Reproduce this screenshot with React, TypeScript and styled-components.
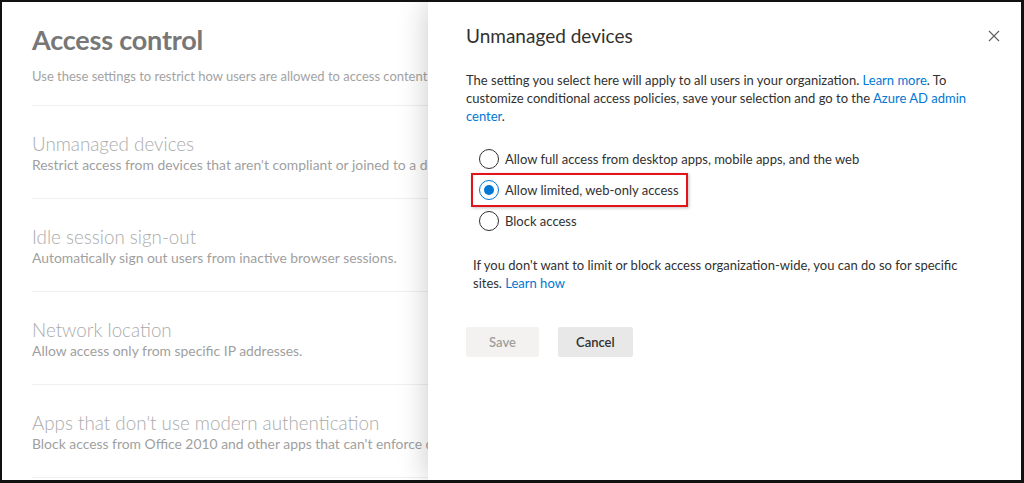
import styled, { createGlobalStyle } from "styled-components";

const GlobalStyle = createGlobalStyle`
  html, body {
    margin: 0;
    padding: 0;
    background: #ffffff;
  }
  * {
    box-sizing: border-box;
  }
`;

const font = `"Segoe UI", Lato, "Open Sans", sans-serif`;

const Frame = styled.div`
  position: relative;
  width: 1024px;
  height: 483px;
  overflow: hidden;
  border: 2px solid #111111;
  border-right-width: 3px;
  border-bottom-width: 3px;
  background: #ffffff;
  font-family: ${font};
`;

const Page = styled.main`
  padding: 20px 0 0 30px;
  width: 760px;
`;

const PageHeader = styled.header`
  padding-bottom: 20px;
  border-bottom: 1px solid #efefef;
`;

const PageTitle = styled.h1`
  margin: 0;
  font-size: 27px;
  line-height: 36px;
  font-weight: 700;
  color: #777777;
  letter-spacing: -0.2px;
`;

const PageIntro = styled.p`
  margin: 9px 0 0;
  font-size: 13px;
  line-height: 18px;
  color: #a3a3a3;
  white-space: nowrap;
`;

const Setting = styled.section`
  padding: 26px 0 24px;
  border-bottom: 1px solid #efefef;
`;

const SettingTitle = styled.h2`
  margin: 0;
  font-size: 18.8px;
  line-height: 24px;
  font-weight: 300;
  color: #ababab;
  white-space: nowrap;
`;

const SettingDesc = styled.p`
  margin: 0;
  font-size: 13.9px;
  line-height: 18px;
  color: #9f9f9f;
  white-space: nowrap;
`;

const Panel = styled.aside`
  position: absolute;
  top: 0;
  right: 0;
  bottom: 0;
  width: 593px;
  background: #ffffff;
  box-shadow: 0 0 28px rgba(0, 0, 0, 0.22);
  padding: 20px 15px 0 38px;
  color: #323130;
`;

const PanelHeader = styled.div`
  display: flex;
  align-items: center;
  justify-content: space-between;
  height: 28px;
  margin-bottom: 21px;
`;

const PanelTitle = styled.h2`
  margin: 0;
  font-size: 19px;
  line-height: 28px;
  font-weight: 400;
  color: #323130;
`;

const CloseButton = styled.button`
  display: flex;
  align-items: center;
  justify-content: center;
  width: 24px;
  height: 24px;
  padding: 0;
  border: 0;
  background: transparent;
  color: #605e5c;
  cursor: pointer;
`;

const Text = styled.p<{ $indent?: number; $width: number }>`
  margin: 0;
  padding-left: ${(p) => p.$indent ?? 0}px;
  font-size: 13px;
  line-height: 18px;
  color: #323130;
  max-width: ${(p) => p.$width}px;
`;

const Link = styled.a`
  color: #0078d4;
  text-decoration: none;
`;

const Options = styled.div`
  display: flex;
  flex-direction: column;
  align-items: flex-start;
  gap: 11px;
  margin: 24px 0 25px 13px;
`;

const Option = styled.label<{ $highlight?: boolean }>`
  position: relative;
  display: inline-flex;
  align-items: center;
  gap: 6px;
  height: 20px;
  font-size: 13px;
  color: #323130;
  cursor: pointer;

  ${(p) =>
    p.$highlight &&
    `
    &::after {
      content: "";
      position: absolute;
      top: -7px;
      bottom: -7px;
      left: -8px;
      right: -9px;
      border: 2px solid #e3121b;
      box-shadow: 1px 1px 3px rgba(0, 0, 0, 0.25);
      pointer-events: none;
    }
  `}
`;

const Radio = styled.span<{ $checked?: boolean }>`
  position: relative;
  width: 20px;
  height: 20px;
  border-radius: 50%;
  border: 1px solid ${(p) => (p.$checked ? "#0078d4" : "#323130")};
  flex-shrink: 0;

  &::before {
    content: "";
    display: ${(p) => (p.$checked ? "block" : "none")};
    position: absolute;
    top: 4px;
    left: 4px;
    width: 10px;
    height: 10px;
    border-radius: 50%;
    background: #0078d4;
  }
`;

const Actions = styled.div`
  display: flex;
  gap: 19px;
  margin-top: 35px;
`;

const Button = styled.button<{ $disabled?: boolean }>`
  min-width: 73px;
  height: 30px;
  padding: 0 18px;
  border: 0;
  border-radius: 2px;
  font-family: ${font};
  font-size: 13px;
  font-weight: 600;
  background: ${(p) => (p.$disabled ? "#f3f2f1" : "#e8e8e8")};
  color: ${(p) => (p.$disabled ? "#a19f9d" : "#323130")};
  cursor: ${(p) => (p.$disabled ? "default" : "pointer")};
`;

const settings = [
  {
    title: "Unmanaged devices",
    desc: "Restrict access from devices that aren't compliant or joined to a domain.",
  },
  {
    title: "Idle session sign-out",
    desc: "Automatically sign out users from inactive browser sessions.",
  },
  {
    title: "Network location",
    desc: "Allow access only from specific IP addresses.",
  },
  {
    title: "Apps that don't use modern authentication",
    desc: "Block access from Office 2010 and other apps that can't enforce device-based restrictions.",
  },
];

const options = [
  { label: "Allow full access from desktop apps, mobile apps, and the web", checked: false },
  { label: "Allow limited, web-only access", checked: true },
  { label: "Block access", checked: false },
];

export default function App() {
  return (
    <>
      <GlobalStyle />
      <Frame>
        <Page>
          <PageHeader>
            <PageTitle>Access control</PageTitle>
            <PageIntro>
              Use these settings to restrict how users are allowed to access content in SharePoint and OneDrive.
            </PageIntro>
          </PageHeader>
          {settings.map((s) => (
            <Setting key={s.title}>
              <SettingTitle>{s.title}</SettingTitle>
              <SettingDesc>{s.desc}</SettingDesc>
            </Setting>
          ))}
        </Page>

        <Panel>
          <PanelHeader>
            <PanelTitle>Unmanaged devices</PanelTitle>
            <CloseButton aria-label="Close">
              <svg width="12" height="12" viewBox="0 0 12 12">
                <path d="M1 1 L11 11 M11 1 L1 11" stroke="currentColor" strokeWidth="1.1" fill="none" />
              </svg>
            </CloseButton>
          </PanelHeader>

          <Text $width={540}>
            The setting you select here will apply to all users in your organization.{" "}
            <Link href="#">Learn more</Link>. To customize conditional access policies, save your selection and
            go to the <Link href="#">Azure AD admin center</Link>.
          </Text>

          <Options>
            {options.map((o) => (
              <Option key={o.label} $highlight={o.checked}>
                <Radio $checked={o.checked} />
                {o.label}
              </Option>
            ))}
          </Options>

          <Text $indent={7} $width={500}>
            If you don't want to limit or block access organization-wide, you can do so for specific sites.{" "}
            <Link href="#">Learn how</Link>
          </Text>

          <Actions>
            <Button $disabled>Save</Button>
            <Button>Cancel</Button>
          </Actions>
        </Panel>
      </Frame>
    </>
  );
}
